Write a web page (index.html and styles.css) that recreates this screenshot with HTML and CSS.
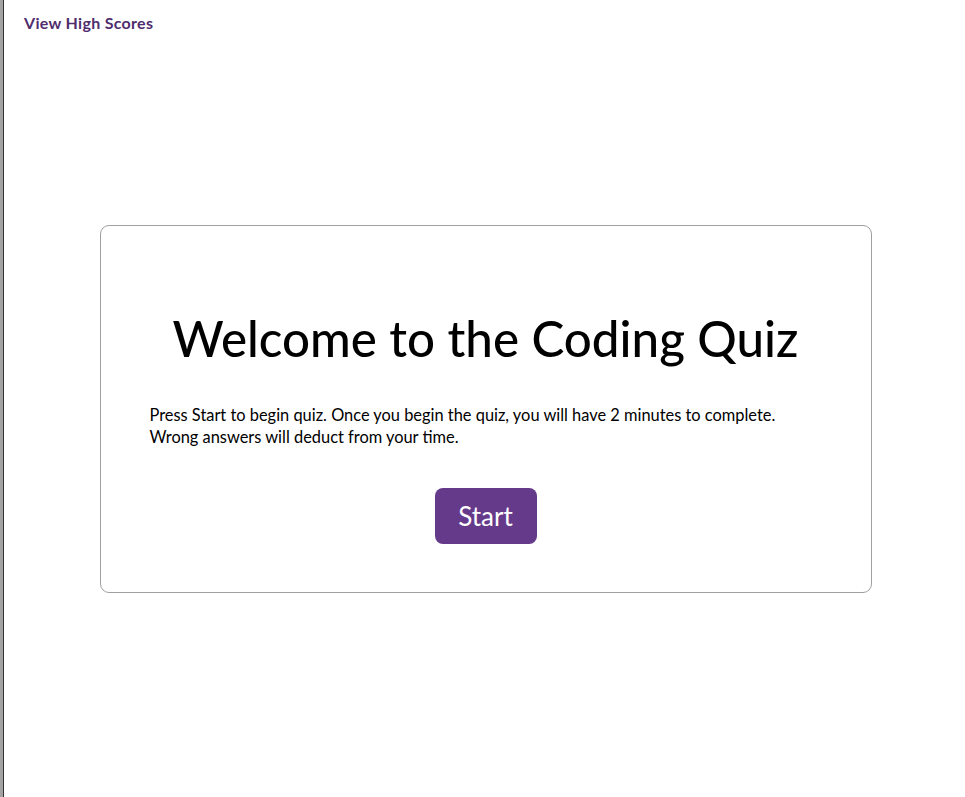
FILE: index.html
```html
<!DOCTYPE html>
<html lang="en">
<head>
<meta charset="utf-8">
<title>Coding Quiz</title>
<link rel="stylesheet" href="styles.css">
</head>
<body>
<header class="top">
  <a class="scores-link" href="#">View High Scores</a>
</header>
<main class="stage">
  <section class="card">
    <h1 class="title">Welcome to the Coding Quiz</h1>
    <p class="intro">Press Start to begin quiz. Once you begin the quiz, you will have 2 minutes to complete.<br>Wrong answers will deduct from your time.</p>
    <div class="actions">
      <button class="start-btn" type="button">Start</button>
    </div>
  </section>
</main>
</body>
</html>
```

FILE: styles.css
```css
html, body {
  margin: 0;
  padding: 0;
  height: 100%;
}
body {
  font-family: "Lato", "Open Sans", sans-serif;
  color: #000;
  background: #fff;
  border-left: 3px solid #a3a3a3;
  box-shadow: inset 1px 0 0 #333;
  box-sizing: border-box;
}
.top {
  padding: 13px 21px 0;
  height: 40px;
  box-sizing: border-box;
}
.scores-link {
  font-size: 16px;
  font-weight: 700;
  letter-spacing: 0.3px;
  color: #4f2d6e;
  text-decoration: none;
}
.stage {
  padding-top: 185px;
  display: flex;
  justify-content: center;
}
.card {
  width: 772px;
  height: 368px;
  box-sizing: border-box;
  border: 1px solid #a0a0a0;
  border-radius: 9px;
  padding: 80px 49px 0;
  margin-left: 3px;
}
.title {
  margin: 0;
  text-align: center;
  font-size: 49.3px;
  font-weight: 500;
  line-height: 64px;
}
.intro {
  margin: 34px 0 0;
  font-size: 16.4px;
  line-height: 22px;
}
.actions {
  display: flex;
  justify-content: center;
  margin-top: 40px;
}
.start-btn {
  width: 102px;
  height: 56px;
  border: none;
  border-radius: 8px;
  background: #663a8b;
  color: #fff;
  font-family: inherit;
  font-size: 26px;
  cursor: pointer;
}
```
